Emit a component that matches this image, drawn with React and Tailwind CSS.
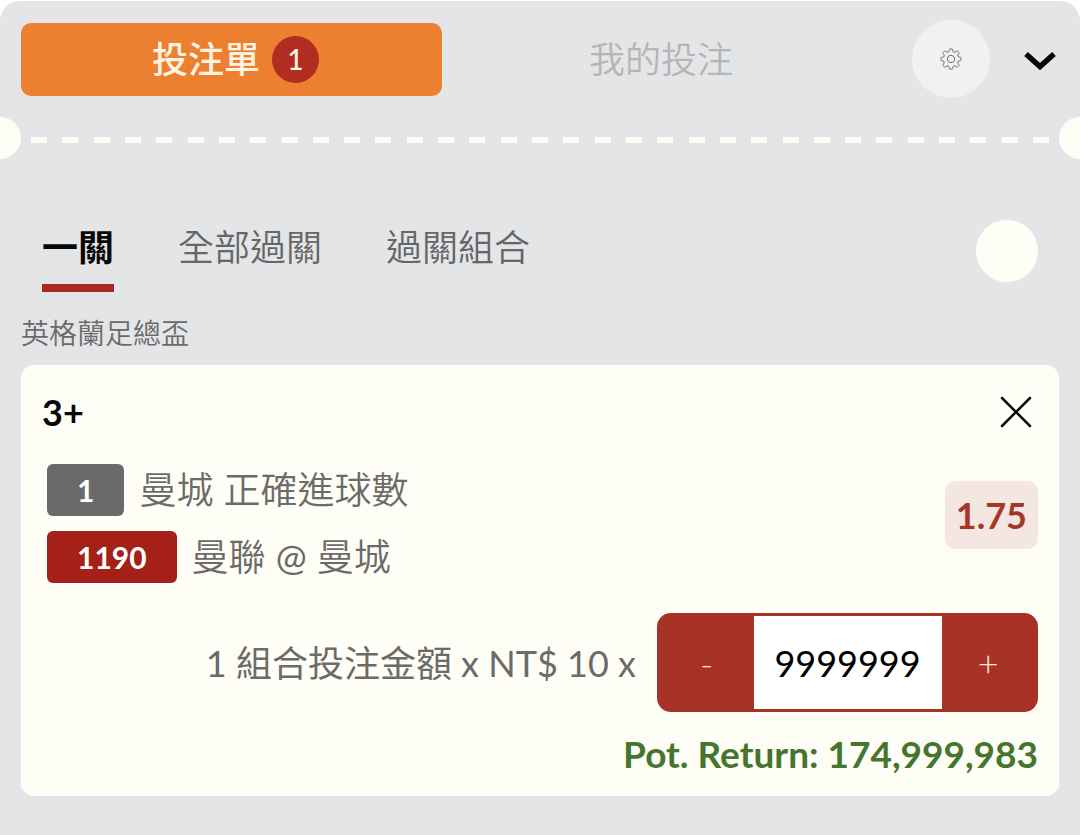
import { useState } from "react";

const BET_TYPES = ["一關", "全部過關", "過關組合"];
const ODDS = 1.75;
const UNIT = 10;
const DASHES = 33;

const GearIcon = () => (
  <svg
    viewBox="0 0 22 22"
    className="size-[22px]"
    fill="none"
    stroke="#6f6f72"
    strokeWidth="1"
    strokeLinejoin="round"
    aria-hidden="true"
  >
    <path d="M9 3.5L9.4 1.4Q9.5 .9 10 .9h2q.5 0 .6.5L13 3.5q1 .9 1.900.7L16.700 3q.4-.3.8.1l1.400 1.400q.4.4.1.800L17.800 7.100q-.2.900.7 1.900l2.100.4q.5.1.5.600v2q0 .5-.5.600L18.500 13q-.9 1-.7 1.900L19 16.700q.3.400-.1.800l-1.400 1.400q-.4.400-.8.100L14.900 17.800q-.9-.2-1.900.7l-.4 2.100q-.1.500-.6.500h-2q-.5 0-.6-.5L9 18.500q-1-.9-1.900-.7L5.300 19q-.4.300-.8-.1l-1.400-1.400q-.4-.4-.1-.8L4.200 14.900q.2-.9-.7-1.900l-2.100-.4q-.5-.1-.5-.6v-2q0-.5.5-.6L3.500 9q.9-1 .7-1.900L3 5.300q-.3-.4.1-.8l1.400-1.400q.4-.4.8-.1L7.100 4.200Q8 4.400 9 3.500z" />
    <circle cx="11" cy="11" r="3.7" />
  </svg>
);

const ChevronIcon = () => (
  <svg
    viewBox="0 0 32 20"
    className="h-5 w-8"
    fill="none"
    stroke="#07080a"
    strokeWidth="5.5"
    aria-hidden="true"
  >
    <path d="M2 3l14 12.5L30 3" />
  </svg>
);

const CloseIcon = () => (
  <svg
    viewBox="0 0 32 32"
    className="size-8"
    fill="none"
    stroke="currentColor"
    strokeWidth="2.5"
    strokeLinecap="round"
    aria-hidden="true"
  >
    <path d="M2 2l28 28M30 2L2 30" />
  </svg>
);

const Header = () => (
  <header className="flex items-center pt-[19px] pr-6 pl-[21px]">
    <div className="flex flex-1 text-[36px] leading-none">
      <button className="flex h-[73px] w-[49%] items-center justify-center gap-3 rounded-[10px] bg-[#ed8030] pl-2 font-medium text-[#fff3e2]">
        投注單
        <span className="flex size-[47px] items-center justify-center rounded-full bg-[#b12d22] text-[28px]">
          1
        </span>
      </button>
      <button className="flex-1 font-[350] text-[#b4b5b7]">我的投注</button>
    </div>
    <button
      className="ml-8 flex size-[78px] items-center justify-center rounded-full bg-[#f1f1f3]"
      aria-label="Settings"
    >
      <GearIcon />
    </button>
    <button className="mt-1 ml-[34px]" aria-label="Collapse">
      <ChevronIcon />
    </button>
  </header>
);

// Ticket tear line with a notch on each side
const Divider = () => (
  <div className="mt-[19px] flex items-center overflow-hidden">
    <span className="-ml-[21px] size-[42px] shrink-0 rounded-full bg-[#fefef6]" />
    <div className="mx-[10px] flex flex-1 justify-between pt-1">
      {Array.from({ length: DASHES }, (_, i) => (
        <span key={i} className="h-[6px] w-4 bg-[#fdfdf6]" />
      ))}
    </div>
    <span className="-mr-[21px] size-[42px] shrink-0 rounded-full bg-[#fefef6]" />
  </div>
);

const BetCard = () => {
  const [stake, setStake] = useState(9999999);
  const potReturn = Math.round(stake * UNIT * ODDS);

  return (
    <article className="mx-[21px] rounded-[13px] bg-[#fefef6] px-[21px] pt-[21px] pb-4 text-[#6b6b69]">
      <div className="flex items-center justify-between">
        <h2 className="text-[36px] leading-[52px] font-bold text-[#07080a]">
          3+
        </h2>
        <button className="mr-[6px] text-[#07080a]" aria-label="Remove">
          <CloseIcon />
        </button>
      </div>

      <div className="mt-[26px] flex items-center justify-between">
        <div className="ml-[5px] flex flex-col gap-[15px] text-[37px] leading-[52px] font-[350]">
          <div className="flex items-center gap-[15px]">
            <span className="rounded-md bg-[#6a6a6a] px-[30px] text-[30px] font-bold text-white">
              1
            </span>
            曼城 正確進球數
          </div>
          <div className="flex items-center gap-[15px]">
            <span className="rounded-md bg-[#a52017] px-[30px] text-[30px] font-bold text-white">
              1190
            </span>
            <span>
              曼聯 <span className="font-normal">@</span> 曼城
            </span>
          </div>
        </div>
        <span className="mb-[18px] rounded-[10px] bg-[#f4e7e1] px-[11px] text-[36px] leading-[68px] font-bold text-[#a53729]">
          {ODDS}
        </span>
      </div>

      <div className="mt-[30px] flex items-center justify-end gap-[21px]">
        <label htmlFor="stake" className="text-[36px] leading-[52px]">
          1 組合投注金額 x NT$ {UNIT} x
        </label>
        <div className="flex h-[99px] w-[381px] overflow-hidden rounded-[14px] border-[3px] border-[#a63327] bg-[#a83225]">
          <button
            className="flex-1 text-[36px] font-light text-[#fbe9dc]"
            onClick={() => setStake(Math.max(0, stake - 1))}
          >
            -
          </button>
          <input
            id="stake"
            inputMode="numeric"
            className="w-[188px] bg-white text-center text-[36px] text-black outline-none"
            value={stake}
            onChange={(e) => setStake(Number(e.target.value) || 0)}
          />
          <button
            className="flex-1 text-[36px] font-light text-[#fbe9dc]"
            onClick={() => setStake(stake + 1)}
          >
            +
          </button>
        </div>
      </div>

      <p className="mt-4 text-right text-[37px] leading-[52px] font-bold text-[#45752f]">
        Pot. Return: {potReturn.toLocaleString("en-US")}
      </p>
    </article>
  );
};

const App = () => {
  const [active, setActive] = useState(0);

  return (
    <div className="min-h-screen bg-white pt-px font-['Lato','Noto_Sans_CJK_TC',sans-serif]">
      <main className="min-h-[calc(100vh-1px)] rounded-t-[20px] bg-[#e4e5e7] pb-[38px]">
        <Header />
        <Divider />

        <nav className="mt-[61px] flex items-start justify-between px-[42px]">
          <div className="flex gap-16">
            {BET_TYPES.map((type, i) => (
              <button
                key={type}
                onClick={() => setActive(i)}
                className={`border-b-8 pb-[10px] text-[36px] leading-[54px] ${
                  i === active
                    ? "border-[#ab2722] font-bold text-[#07080a]"
                    : "border-transparent font-[350] text-[#656668]"
                }`}
              >
                {type}
              </button>
            ))}
          </div>
          <button
            className="size-[62px] rounded-full bg-[#fefef6]"
            aria-label="Toggle all"
          />
        </nav>

        <p className="mt-5 mb-[11px] px-[21px] text-[28px] leading-[42px] font-[350] text-[#6a6b6d]">
          英格蘭足總盃
        </p>
        <BetCard />
      </main>
    </div>
  );
};

export default App;
